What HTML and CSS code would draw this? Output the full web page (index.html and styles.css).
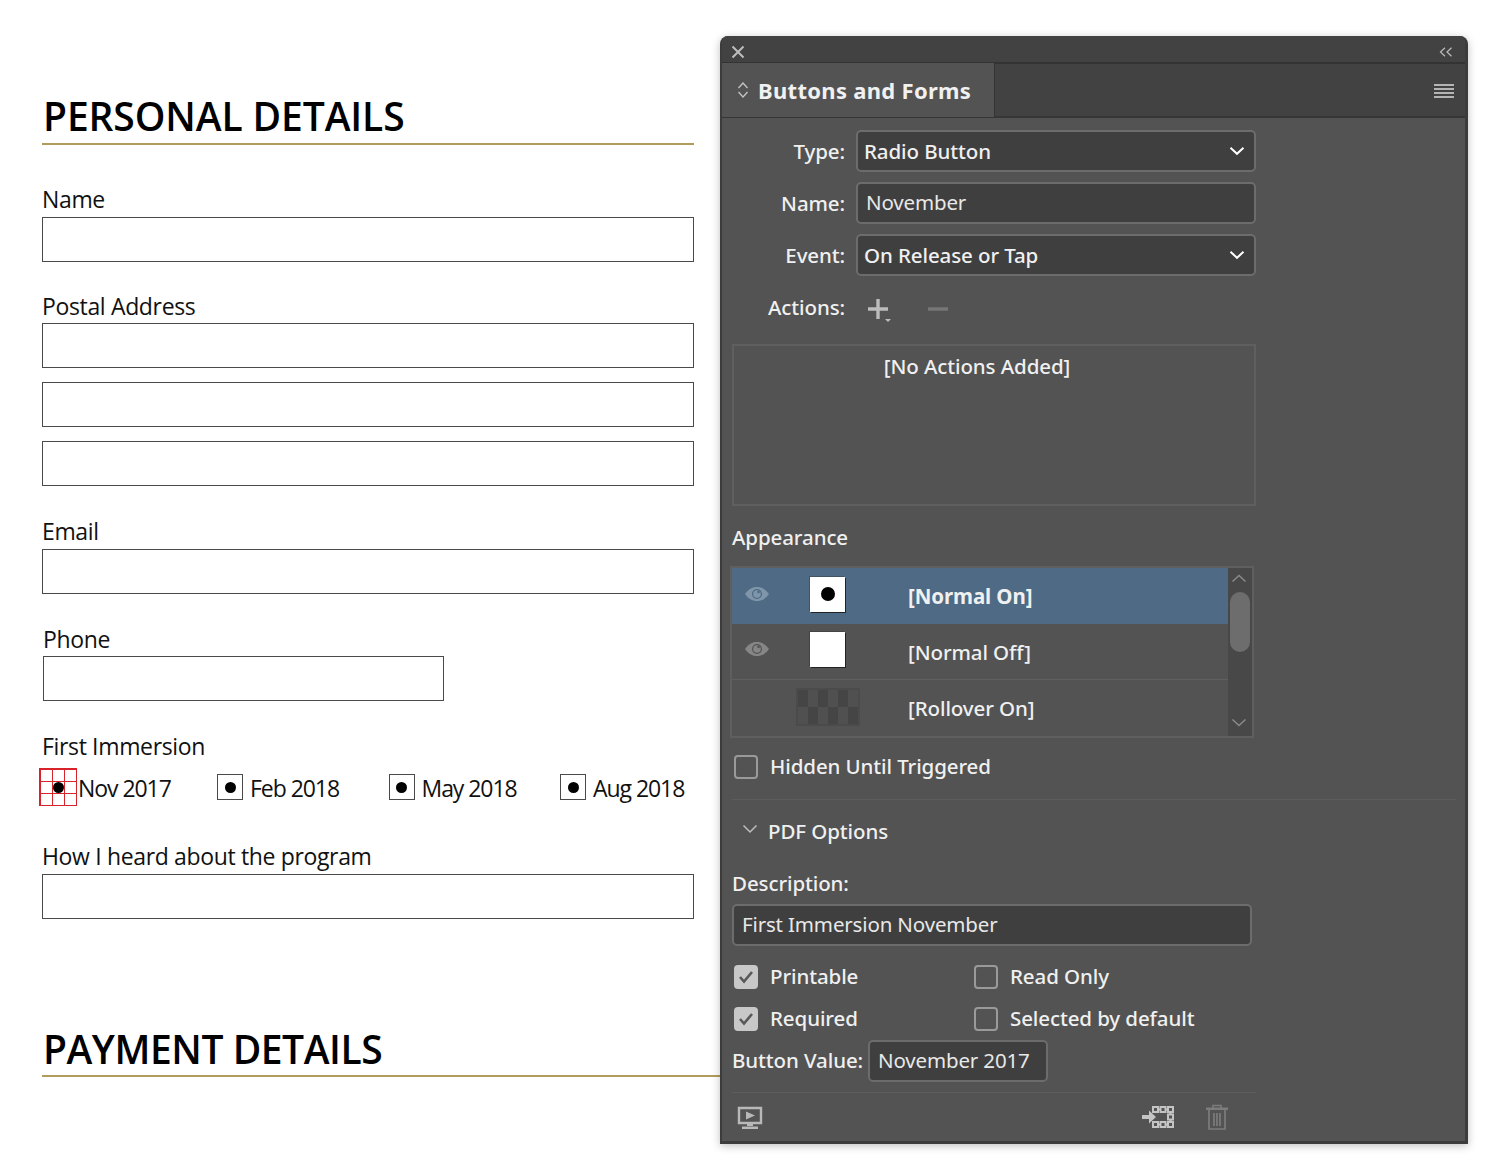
FILE: index.html
```html
<!DOCTYPE html>
<html lang="en">
<head>
<meta charset="utf-8">
<title>Buttons and Forms</title>
<link rel="stylesheet" href="styles.css">
</head>
<body>
<main class="doc">
  <h2 class="sec-title">PERSONAL DETAILS</h2>
  <div class="rule"></div>
  <label class="lbl lbl-name">Name</label>
  <div class="box"></div>
  <label class="lbl lbl-postal">Postal Address</label>
  <div class="box"></div>
  <div class="box box-stack"></div>
  <div class="box box-stack"></div>
  <label class="lbl lbl-email">Email</label>
  <div class="box"></div>
  <label class="lbl lbl-phone">Phone</label>
  <div class="box box-phone"></div>
  <label class="lbl lbl-first">First Immersion</label>
  <div class="radios">
    <div class="radio radio-first">
      <span class="rb rb-sel"><i class="dot"></i>
        <span class="grid"><i></i><i></i><i></i><i></i><i></i><i></i><i></i><i></i><i></i></span>
      </span><span class="rt">Nov 2017</span>
    </div>
    <div class="radio"><span class="rb"><i class="dot"></i></span><span class="rt">Feb 2018</span></div>
    <div class="radio"><span class="rb"><i class="dot"></i></span><span class="rt">May 2018</span></div>
    <div class="radio"><span class="rb"><i class="dot"></i></span><span class="rt">Aug 2018</span></div>
  </div>
  <label class="lbl lbl-how">How I heard about the program</label>
  <div class="box"></div>
  <h2 class="sec-title sec-pay">PAYMENT DETAILS</h2>
  <div class="rule rule-pay"></div>
</main>

<aside class="panel">
  <header class="titlebar">
    <svg class="ic" width="14" height="14" viewBox="0 0 14 14"><path d="M1.5 1.5l11 11M12.5 1.5l-11 11" stroke="#bdbdbd" stroke-width="2" fill="none"/></svg>
    <svg class="ic" width="14" height="10" viewBox="0 0 14 10"><path d="M6 .8L1.5 5 6 9.2M12.5.8L8 5l4.5 4.2" stroke="#bdbdbd" stroke-width="1.2" fill="none"/></svg>
  </header>
  <div class="tabs">
    <div class="tab">
      <svg class="updown" width="12" height="18" viewBox="0 0 12 18"><path d="M1.5 7L6 2l4.500 5M1.500 11L6 16l4.500-5" stroke="#c4c4c4" stroke-width="1.300" fill="none"/></svg>
      <span class="tab-name">Buttons and Forms</span>
    </div>
    <svg class="burger" width="20" height="14" viewBox="0 0 20 14"><path d="M0 1h20M0 5h20M0 9h20M0 13h20" stroke="#b4b4b4" stroke-width="2"/></svg>
  </div>
  <div class="body">
    <div class="form-rows">
      <div class="fr"><span class="fl">Type:</span><div class="ctl"><span class="sel-text">Radio Button</span><svg class="chev" width="16" height="10" viewBox="0 0 16 10"><path d="M1.500 1.800L8 7.800l6.500-6" stroke="#fff" stroke-width="2" fill="none"/></svg></div></div>
      <div class="fr"><span class="fl">Name:</span><div class="ctl ctl-input">November</div></div>
      <div class="fr"><span class="fl">Event:</span><div class="ctl"><span class="sel-text">On Release or Tap</span><svg class="chev" width="16" height="10" viewBox="0 0 16 10"><path d="M1.500 1.800L8 7.800l6.500-6" stroke="#fff" stroke-width="2" fill="none"/></svg></div></div>
      <div class="fr fr-actions"><span class="fl fl-actions">Actions:</span>
        <div class="act-icons">
          <svg width="26" height="26" viewBox="0 0 26 26"><path d="M11 2v20M1 12h20" stroke="#bcbcbc" stroke-width="3.400"/><path d="M18 22h6l-3 3z" fill="#bcbcbc"/></svg>
          <svg width="22" height="26" viewBox="0 0 22 26"><path d="M1 12h20" stroke="#777" stroke-width="3.400"/></svg>
        </div>
      </div>
    </div>
    <div class="actions-box">[No Actions Added]</div>
    <div class="section-label">Appearance</div>
    <div class="states">
      <div class="state-rows">
        <div class="state state-on">
          <svg class="eye" width="24" height="16" viewBox="0 0 24 16"><path d="M0 8C4 2.500 8 1 12 1s8 1.500 12 7c-4 5.500-8 7-12 7S4 13.500 0 8z" fill="#7f95a9"/><circle cx="12" cy="8" r="5" fill="#4e6a85"/><circle cx="12" cy="8" r="3.800" fill="#7f95a9"/><circle cx="13.500" cy="6" r="1.300" fill="#4e6a85"/></svg>
          <span class="swatch"><i class="sw-dot"></i></span>
          <span class="state-name state-name-on">[Normal On]</span>
        </div>
        <div class="state">
          <svg class="eye" width="24" height="16" viewBox="0 0 24 16"><path d="M0 8C4 2.500 8 1 12 1s8 1.500 12 7c-4 5.500-8 7-12 7S4 13.500 0 8z" fill="#868686"/><circle cx="12" cy="8" r="5" fill="#535353"/><circle cx="12" cy="8" r="3.800" fill="#868686"/><circle cx="13.500" cy="6" r="1.300" fill="#535353"/></svg>
          <span class="swatch"></span>
          <span class="state-name">[Normal Off]</span>
        </div>
        <div class="state state-last">
          <span class="eye-gap"></span>
          <span class="checker"></span>
          <span class="state-name">[Rollover On]</span>
        </div>
      </div>
      <div class="scroll">
        <svg width="16" height="9" viewBox="0 0 16 9"><path d="M1.500 7.500L8 1.500l6.500 6" stroke="#8a8a8a" stroke-width="1.500" fill="none"/></svg>
        <div class="thumb"></div>
        <svg class="scroll-down" width="16" height="9" viewBox="0 0 16 9"><path d="M1.500 1.500L8 7.500l6.500-6" stroke="#8a8a8a" stroke-width="1.500" fill="none"/></svg>
      </div>
    </div>
    <div class="chk-row chk-hidden"><span class="chk"></span><span class="chk-text">Hidden Until Triggered</span></div>
    <div class="divider"></div>
    <div class="pdf-head">
      <svg width="16" height="10" viewBox="0 0 16 10"><path d="M1.500 1.500L8 8l6.500-6.500" stroke="#bdbdbd" stroke-width="1.500" fill="none"/></svg>
      <span class="chk-text">PDF Options</span>
    </div>
    <div class="section-label desc-label">Description:</div>
    <div class="ctl ctl-input ctl-desc">First Immersion November</div>
    <div class="checks">
      <div class="chk-row"><span class="chk chk-on"><svg width="16" height="14" viewBox="0 0 16 14"><path d="M2 7l4 4.500L14 2" stroke="#585858" stroke-width="2.600" fill="none"/></svg></span><span class="chk-text">Printable</span></div>
      <div class="chk-row"><span class="chk"></span><span class="chk-text">Read Only</span></div>
      <div class="chk-row"><span class="chk chk-on"><svg width="16" height="14" viewBox="0 0 16 14"><path d="M2 7l4 4.500L14 2" stroke="#585858" stroke-width="2.600" fill="none"/></svg></span><span class="chk-text">Required</span></div>
      <div class="chk-row"><span class="chk"></span><span class="chk-text">Selected by default</span></div>
    </div>
    <div class="value-row"><span class="chk-text">Button Value:</span><div class="ctl ctl-input ctl-value">November 2017</div></div>
    <div class="foot-line"></div>
    <footer class="foot">
      <svg class="monitor" width="26" height="24" viewBox="0 0 26 24"><path d="M2 2h22v15H2z" fill="none" stroke="#b8b8b8" stroke-width="2.400"/><path d="M9 5.500l9 4-9 4z" fill="#b8b8b8"/><path d="M10 18h6v2h-6zM5 20.500h16v2.500H5z" fill="#b8b8b8"/></svg>
      <div class="foot-right">
        <svg width="32" height="22" viewBox="0 0 32 22">
          <path d="M13.500 3.500h15v15h-15" fill="none" stroke="#c4c4c4" stroke-width="2.200"/>
          <g fill="#535353" stroke="#c4c4c4" stroke-width="2">
            <rect x="11" y="1" width="5" height="5"/><rect x="18.500" y="1" width="5" height="5"/><rect x="26" y="1" width="5" height="5"/>
            <rect x="26" y="8.500" width="5" height="5"/>
            <rect x="11" y="16" width="5" height="5"/><rect x="18.500" y="16" width="5" height="5"/><rect x="26" y="16" width="5" height="5"/>
          </g>
          <path d="M0 9h7V4.500l7 6.500-7 6.500V13H0z" fill="#c4c4c4"/>
        </svg>
        <svg width="22" height="26" viewBox="0 0 22 26"><path d="M7 4V1.500h8V4" fill="none" stroke="#7c7c7c" stroke-width="1.600"/><path d="M0 3.500h22V6H0z" fill="#7c7c7c"/><path d="M3 6v19h16V6M8 9v13M11 9v13M14 9v13" fill="none" stroke="#7c7c7c" stroke-width="1.700"/></svg>
      </div>
    </footer>
  </div>
</aside>
</body>
</html>
```
FILE: styles.css
```css
* { box-sizing: border-box; }
html, body { margin: 0; padding: 0; background: #fff; }
body { width: 1498px; height: 1176px; overflow: hidden; position: relative; }

.doc { width: 720px; padding: 90px 0 0 42px; font-family: "Open Sans", "Liberation Sans", sans-serif; color: #111; }
.sec-title { margin: 0 0 0 1px; font-size: 39px; line-height: 52px; font-weight: 600; color: #000; letter-spacing: -0.1px; white-space: nowrap; }
.rule { width: 652px; height: 2px; background: #b29c5c; margin-top: 1px; }
.rule-pay { width: 678px; margin-top: 0; }
.sec-pay { margin-top: 104px; letter-spacing: -0.45px; }

.lbl { display: block; font-size: 23px; line-height: 30px; letter-spacing: -0.35px; white-space: nowrap; margin-bottom: 3px; }
.lbl-name { margin-top: 39px; }
.lbl-postal { margin-top: 29px; margin-bottom: 2px; }
.lbl-email { margin-top: 29.500px; }
.lbl-phone { margin: 30px 0 2px 1px; }
.lbl-first { margin-top: 30px; margin-bottom: 0; }
.lbl-how { margin-top: 34px; }
.box { width: 652px; height: 45px; border: 1.500px solid #4a4a4a; background: #fff; }
.box-stack { margin-top: 14px; }
.box-phone { width: 401px; margin-left: 1px; }

.radios { display: grid; grid-template-columns: 178px 171.500px 171.500px auto; margin: 7px 0 0 -3px; height: 39px; align-items: center; font-size: 23px; letter-spacing: -1.050px; }
.radio { display: flex; align-items: center; }
.rt { margin-left: 7px; line-height: 30px; white-space: nowrap; padding-top: 2px; }
.rb { display: flex; width: 26px; height: 26px; border: 1.500px solid #4a4a4a; align-items: center; justify-content: center; position: relative; flex: none; }
.rb-sel { width: 38px; height: 38px; border: 0; }
.radio-first .rt { margin-left: 1px; }
.dot { display: block; width: 11px; height: 11px; border-radius: 50%; background: #000; }
.grid { position: absolute; inset: 0; display: grid; grid-template-columns: repeat(3, 1fr); grid-template-rows: repeat(3, 1fr); border: 1px solid #d8232a; }
.grid i { border: 1px solid #d8232a; margin: -0.500px; }

.panel { position: absolute; left: 720px; top: 36px; width: 748px; height: 1108px; background: #535353; border-radius: 8px 8px 0 0; border: solid #3c3c3c; border-width: 0 3px 3px 2px; box-shadow: 0 2px 8px rgba(0,0,0,.25); font-family: "Noto Sans", "Open Sans", sans-serif; font-size: 20.500px; font-weight: 500; letter-spacing: -0.1px; color: #f0f0f0; overflow: hidden; }
.titlebar { height: 28px; background: #424242; border-bottom: 2px solid #333; display: flex; justify-content: space-between; align-items: center; padding: 6px 12px 0 9px; }
.tabs { height: 54px; background: #424242; border-bottom: 2px solid #363636; display: flex; justify-content: space-between; align-items: center; padding-right: 11px; }
.tab { height: 54px; width: 273px; background: #535353; border-right: 1px solid #333; display: flex; align-items: center; padding-left: 15px; }
.updown { margin-right: 9px; flex: none; }
.tab-name { font-weight: 700; font-size: 22px; letter-spacing: .3px; color: #f1f1f1; white-space: nowrap; }
.burger { margin-top: 2px; }

.body { padding: 12px 0 0 10px; }
.form-rows { display: grid; row-gap: 10px; }
.fr { display: grid; grid-template-columns: 113px 400px; column-gap: 11px; height: 42px; align-items: center; }
.fl { text-align: right; white-space: nowrap; padding-bottom: 1px; }
.fl-actions { padding-bottom: 2px; }
.fr-actions { height: 44px; }
.ctl { height: 42px; background: #3f3f3f; border: 2px solid #6c6c6c; border-radius: 5px; display: flex; align-items: center; justify-content: space-between; padding: 0 9px 0 6px; white-space: nowrap; }
.ctl-input { padding-left: 8px; padding-bottom: 2px; letter-spacing: -0.15px; font-weight: 400; color: #e8e8e8; }
.sel-text { line-height: 1; }
.act-icons { display: flex; gap: 34px; padding: 4px 0 0 11px; }
.actions-box { width: 524px; height: 162px; margin-top: 14px; border: 2px solid #5f5f5f; padding: 6px 34px 0 0; text-align: center; }
.section-label { margin-top: 17px; line-height: 28px; }
.states { width: 524px; height: 172px; margin: 15px 0 0 -2px; border: 2px solid #5f5f5f; display: flex; }
.state-rows { flex: 1; }
.state { height: 56px; display: flex; align-items: center; border-bottom: 1px solid #5f5f5f; }
.state-on { background: #4e6a85; border-bottom: 0; }
.state-last { border-bottom: 0; }
.eye { margin-left: 13px; flex: none; margin-top: -5px; }
.eye-gap { width: 37px; flex: none; }
.swatch { width: 35px; height: 35px; margin: -4px 0 0 41px; background: #fff; box-shadow: 1px 1px 0 #222, -1px -1px 0 rgba(40,40,40,.35); display: flex; align-items: center; justify-content: center; flex: none; }
.sw-dot { width: 14px; height: 14px; border-radius: 50%; background: #000; }
.checker { width: 64px; height: 38px; margin: -2px 0 0 27px; flex: none; border: 2px solid #4b4b4b; background-image: repeating-conic-gradient(#505050 0 25%, #454545 0 50%); background-size: 20px 34px; }
.state-name { margin-left: 63px; white-space: nowrap; }
.state-last .state-name { margin-left: 48px; }
.state-name-on { font-weight: 700; }
.scroll { width: 24px; background: #484848; display: flex; flex-direction: column; align-items: center; padding: 6px 2px 0 0; position: relative; }
.thumb { width: 20px; height: 60px; background: #6d6d6d; border-radius: 10px; margin: 9px -2px 0 0; }
.scroll-down { margin-top: auto; margin-bottom: 9px; }
.chk-row { display: flex; align-items: center; gap: 12px; white-space: nowrap; height: 24px; }
.chk-text { padding-bottom: 2px; }
.chk { width: 24px; height: 24px; border: 2px solid #9a9a9a; border-radius: 4px; flex: none; margin-left: 2px; display: flex; align-items: center; justify-content: center; }
.chk-on { background: #c8c8c8; border-color: #c8c8c8; }
.chk-hidden { margin-top: 17px; }
.divider { height: 1px; background: #5d5d5d; margin: 20px 0 0 0; width: 724px; }
.pdf-head { display: flex; align-items: center; gap: 10px; margin: 18px 0 0 10px; height: 28px; }
.pdf-head svg { margin-top: -6px; }
.desc-label { margin-top: 24px; padding-bottom: 2px; height: 28px; line-height: 26px; }
.ctl-desc { width: 520px; margin-top: 6px; padding-left: 8px; }
.checks { display: grid; grid-template-columns: 240px 280px; row-gap: 18px; margin-top: 19px; }
.value-row { display: flex; align-items: center; gap: 5px; margin-top: 9px; height: 42px; white-space: nowrap; }
.ctl-value { width: 180px; }
.foot-line { height: 1px; background: #5d5d5d; margin-top: 10px; width: 524px; }
.foot { display: flex; justify-content: space-between; align-items: center; width: 491px; margin: 11px 0 0 5px; }
.monitor { margin-top: 1px; }
.foot-right { display: flex; align-items: center; gap: 32px; }
```
